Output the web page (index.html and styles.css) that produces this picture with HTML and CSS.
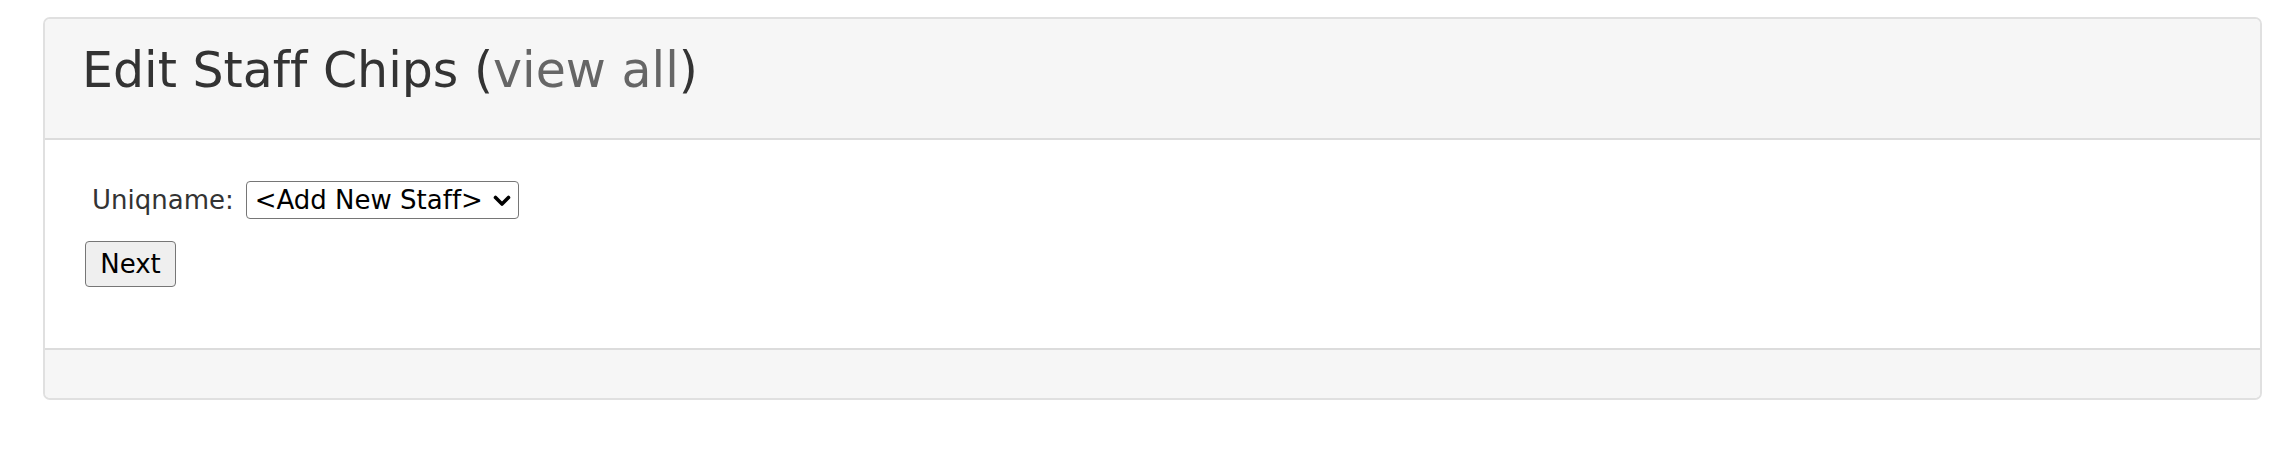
FILE: index.html
```html
<!DOCTYPE html>
<html>
<head>
<meta charset="utf-8">
<title>Edit Staff Chips</title>
<link rel="stylesheet" href="styles.css">
</head>
<body>
<div class="panel">
  <div class="panel-heading">
    <h1 class="panel-title">Edit Staff Chips (<a class="view-all" href="#">view all</a>)</h1>
  </div>
  <div class="panel-body">
    <form class="staff-form">
      <div class="form-row">
        <label class="field-label" for="uniqname">Uniqname:</label>
        <span class="select-wrap">
          <select class="staff-select" id="uniqname">
            <option>&lt;Add New Staff&gt;</option>
          </select>
          <svg class="select-arrow" width="18" height="12" viewBox="0 0 18 12" aria-hidden="true">
            <path d="M2.5 2.5 L9 9 L15.5 2.5" fill="none" stroke="#000" stroke-width="3.6" stroke-linecap="round" stroke-linejoin="round"/>
          </svg>
        </span>
      </div>
      <button class="next-btn" type="button">Next</button>
    </form>
  </div>
  <div class="panel-footer"></div>
</div>
</body>
</html>
```
FILE: styles.css
```css
html, body {
  margin: 0;
  padding: 0;
  background: #ffffff;
}
body {
  font-family: "DejaVu Sans", Verdana, sans-serif;
  font-variant-ligatures: none;
  color: #333333;
  padding: 17px 30px 0 43px;
}
.panel {
  border: 2px solid #e0e0e0;
  border-radius: 7px;
  overflow: hidden;
  background: #ffffff;
}
.panel-heading {
  background: #f6f6f6;
  border-bottom: 2px solid #dcdcdc;
  padding: 25px 36px 41px 37px;
}
.panel-title {
  margin: 0;
  font-size: 49px;
  font-weight: normal;
  line-height: 53px;
  color: #333333;
  font-variant-ligatures: none;
}
.view-all {
  color: #666666;
  text-decoration: none;
}
.panel-body {
  padding: 41px 38px 61px 40px;
}
.form-row {
  display: flex;
  align-items: center;
  gap: 12px;
  padding-left: 7px;
}
.field-label {
  font-size: 26px;
  color: #333333;
}
.select-wrap {
  position: relative;
  display: inline-block;
  height: 38px;
}
.staff-select {
  -webkit-appearance: none;
  appearance: none;
  display: block;
  font-family: "DejaVu Sans", Verdana, sans-serif;
  font-variant-ligatures: none;
  font-size: 26px;
  color: #000000;
  width: 273px;
  height: 38px;
  border: 1px solid #767676;
  border-radius: 4px;
  background: #ffffff;
  padding: 0 0 0 8px;
  margin: 0;
}
.select-arrow {
  position: absolute;
  right: 8px;
  top: 14px;
  pointer-events: none;
}
.next-btn {
  display: block;
  margin-top: 22px;
  font-family: "DejaVu Sans", Verdana, sans-serif;
  font-size: 26px;
  color: #000000;
  background: #efefef;
  border: 1px solid #767676;
  border-radius: 4px;
  width: 91px;
  height: 46px;
  padding: 0;
}
.panel-footer {
  background: #f6f6f6;
  border-top: 2px solid #dcdcdc;
  height: 48px;
}
```
